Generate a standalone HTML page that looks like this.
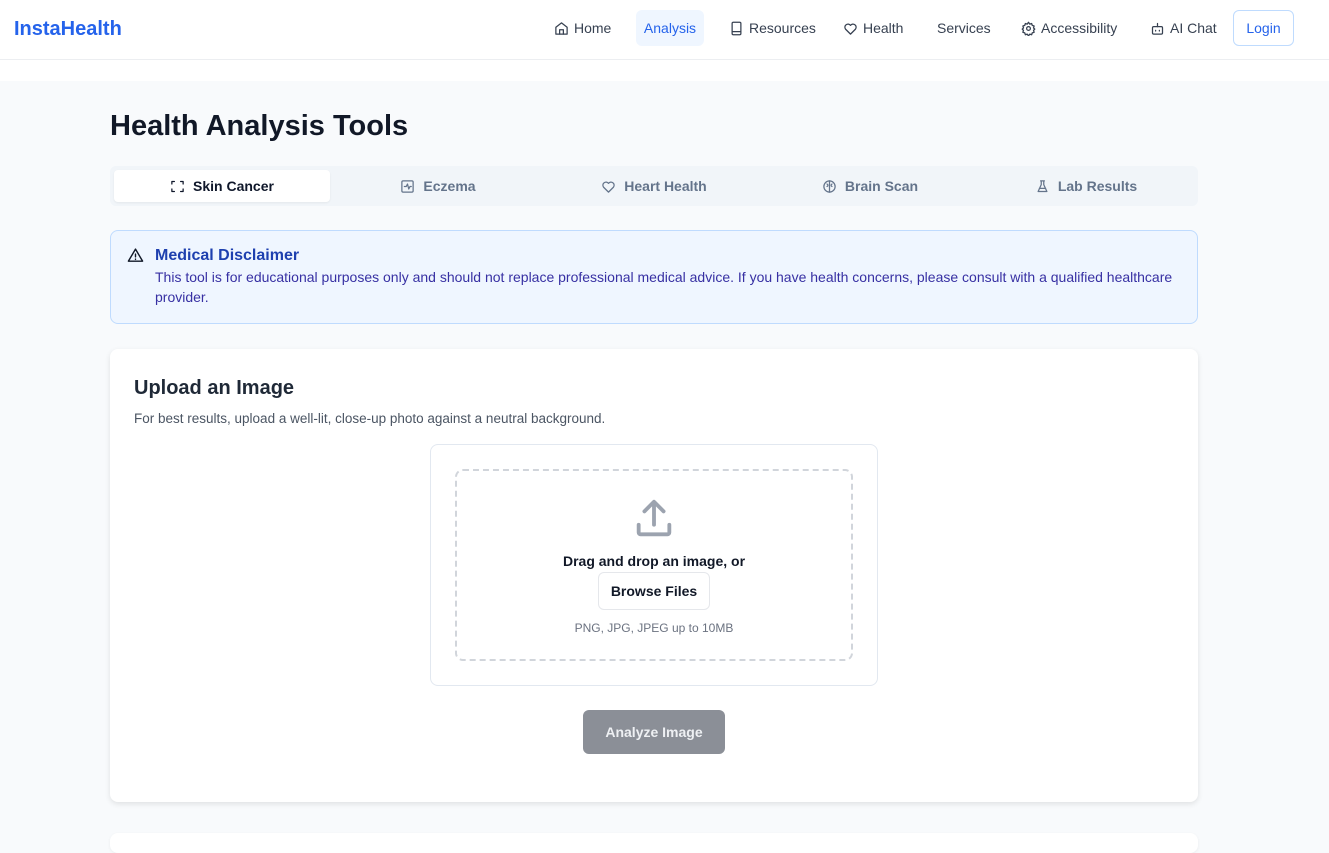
<!DOCTYPE html>
<html><head><meta charset="utf-8"><style>
*{box-sizing:border-box;margin:0;padding:0}
body{width:1329px;height:840px;overflow:hidden;font-family:"Liberation Sans",sans-serif;background:#f8fafc;color:#111827;position:relative}
.hdr{position:absolute;left:0;top:0;width:1329px;height:60px;background:#fff;border-bottom:1px solid #eceef1}
.gap{position:absolute;left:0;top:60px;width:1329px;height:21px;background:#fff}
.logo{position:absolute;left:14px;top:18px;font-size:20px;font-weight:bold;color:#2563eb}
.nav{position:absolute;top:10px;height:36px;display:flex;align-items:center;font-size:14px;color:#374151;gap:5px}
.nav svg{width:15px;height:15px;fill:none;stroke:#374151;stroke-width:2;stroke-linecap:round;stroke-linejoin:round}
.abs{position:absolute}
h1{position:absolute;left:110px;top:110px;font-size:29px;font-weight:bold;color:#111827}
.tabs{position:absolute;left:110px;top:166px;width:1088px;height:40px;background:#f1f5f9;border-radius:6px}
.tab{position:absolute;top:4px;height:32px;width:216px;display:flex;align-items:center;justify-content:center;gap:8px;font-size:14px;color:#64748b;font-weight:bold}
.tab svg{width:15px;height:15px;fill:none;stroke:#64748b;stroke-width:2;stroke-linecap:round;stroke-linejoin:round}
.tab.on{background:#fff;color:#0f172a;border-radius:4px;box-shadow:0 1px 2px rgba(0,0,0,.06)}
.tab.on svg{stroke:#0f172a}
.disc{position:absolute;left:110px;top:230px;width:1088px;height:94px;background:#eff6ff;border:1px solid #bfdbfe;border-radius:8px}
.card{position:absolute;left:110px;top:349px;width:1088px;height:453px;background:#fff;border-radius:8px;box-shadow:0 2px 6px rgba(0,0,0,.1)}
</style></head><body>
<div class="hdr"></div><div class="gap"></div>
<div class="logo">InstaHealth</div>
<div class="nav" style="left:554px"><svg viewBox="0 0 24 24"><path d="M3 10l9-7 9 7v11H3z"/><path d="M9 21v-7h6v7"/></svg>Home</div>
<div class="nav" style="left:636px;width:68px;background:#eff6ff;border-radius:6px;justify-content:center;color:#2563eb">Analysis</div>
<div class="nav" style="left:729px"><svg viewBox="0 0 24 24"><rect x="5" y="2" width="14" height="20" rx="2"/><path d="M5 17h14"/></svg>Resources</div>
<div class="nav" style="left:843px"><svg viewBox="0 0 24 24"><path d="M12 21l-8-8a5 5 0 0 1 8-6 5 5 0 0 1 8 6z"/></svg>Health</div>
<div class="nav" style="left:937px">Services</div>
<div class="nav" style="left:1021px"><svg viewBox="0 0 24 24"><circle cx="12" cy="12" r="3"/><path d="M12 2l2 3 3-1 1 3 3 1-1 3 2 2-2 2 1 3-3 1-1 3-3-1-2 3-2-3-3 1-1-3-3-1 1-3-2-2 2-2-1-3 3-1 1-3 3 1z"/></svg>Accessibility</div>
<div class="nav" style="left:1150px"><svg viewBox="0 0 24 24"><rect x="4" y="9" width="16" height="12" rx="2"/><path d="M12 9V4M9 15v1M15 15v1"/></svg>AI Chat</div>
<div class="nav" style="left:1233px;width:61px;height:36px;border:1px solid #bfdbfe;border-radius:6px;justify-content:center;color:#2563eb">Login</div>

<h1>Health Analysis Tools</h1>
<div class="tabs">
<div class="tab on" style="left:4px"><svg viewBox="0 0 24 24"><path d="M3 8V4h4M17 4h4v4M21 16v4h-4M7 20H3v-4"/></svg>Skin Cancer</div>
<div class="tab" style="left:220px"><svg viewBox="0 0 24 24"><rect x="3" y="3" width="18" height="18" rx="2"/><path d="M7 12h3l2-4 2 8 2-4h2"/></svg>Eczema</div>
<div class="tab" style="left:436px"><svg viewBox="0 0 24 24"><path d="M12 21l-8-8a5 5 0 0 1 8-6 5 5 0 0 1 8 6z"/></svg>Heart Health</div>
<div class="tab" style="left:652px"><svg viewBox="0 0 24 24"><circle cx="12" cy="12" r="9"/><path d="M12 3v18M8 8c2 1 2 3 0 4M16 8c-2 1-2 3 0 4"/></svg>Brain Scan</div>
<div class="tab" style="left:868px"><svg viewBox="0 0 24 24"><path d="M9 3h6M10 3v6L5 20h14L14 9V3M7 15h10"/></svg>Lab Results</div>
</div>

<div class="disc">
<svg class="abs" style="left:16px;top:16px;width:17px;height:17px" viewBox="0 0 24 24" fill="none" stroke="#111827" stroke-width="2" stroke-linejoin="round" stroke-linecap="round"><path d="M12 3L2 20h20z"/><path d="M12 10v4M12 17v.5"/></svg>
<div class="abs" style="left:44px;top:16px;font-size:16px;color:#1e40af;font-weight:bold">Medical Disclaimer</div>
<div class="abs" style="left:44px;top:36px;width:1030px;font-size:14px;line-height:20px;color:#3730a3">This tool is for educational purposes only and should not replace professional medical advice. If you have health concerns, please consult with a qualified healthcare provider.</div>
</div>

<div class="card">
<div class="abs" style="left:24px;top:28px;font-size:20px;font-weight:bold;color:#1f2937">Upload an Image</div>
<div class="abs" style="left:24px;top:62px;font-size:13.5px;color:#4b5563">For best results, upload a well-lit, close-up photo against a neutral background.</div>
<div class="abs" style="left:320px;top:95px;width:448px;height:242px;border:1px solid #e2e8f0;border-radius:8px"></div>
<div class="abs" style="left:345px;top:120px;width:398px;height:192px;border:2px dashed #d1d5db;border-radius:8px"></div>
<svg class="abs" style="left:521px;top:147px;width:46px;height:46px" viewBox="0 0 24 24" fill="none" stroke="#9ca3af" stroke-width="2" stroke-linecap="round" stroke-linejoin="round"><path d="M4 15v4a1 1 0 0 0 1 1h14a1 1 0 0 0 1-1v-4M12 15V3M7 8l5-5 5 5"/></svg>
<div class="abs" style="left:320px;width:448px;top:204px;text-align:center;font-size:14px;font-weight:bold;color:#111827">Drag and drop an image, or</div>
<div class="abs" style="left:488px;top:223px;width:112px;height:38px;border:1px solid #e5e7eb;border-radius:6px;text-align:center;line-height:36px;font-size:14px;font-weight:bold">Browse Files</div>
<div class="abs" style="left:320px;width:448px;top:272px;text-align:center;font-size:12px;color:#6b7280">PNG, JPG, JPEG up to 10MB</div>
<div class="abs" style="left:473px;top:361px;width:142px;height:44px;background:#8b8f97;border-radius:6px;text-align:center;line-height:44px;font-size:14px;font-weight:bold;color:#eef0f3">Analyze Image</div>
</div>
<div class="abs" style="left:110px;top:833px;width:1088px;height:20px;background:#fff;border-radius:8px;box-shadow:0 1px 3px rgba(0,0,0,.06)"></div>
</body></html>
